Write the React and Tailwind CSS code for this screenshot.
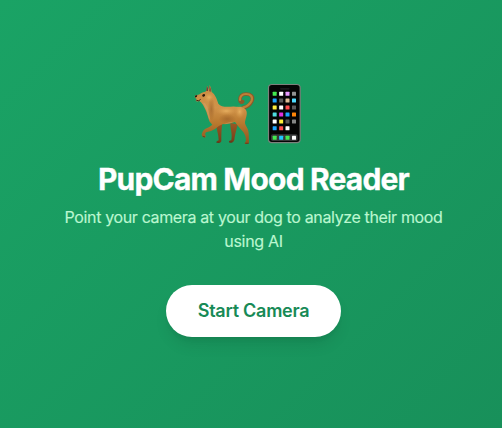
const appRows = [
  ['#43e94f', '#ffffff', '#e99aff', '#929292'],
  ['#1ca5ff', '#5b5b5b', '#dfbd98', '#4fdcff'],
  ['#ffed3b', '#ffffff', '#ff4d4d', '#5b5b5b'],
  ['#4ddbe1', '#df31df', '#1ca5ff', '#ff8508'],
  ['#ffffff', '#fff03a', '#555555', '#858585'],
  ['#1ca5ff', '#ff4d4d', '#ffffff'],
];
const dock = ['#43e94f', '#21c7ff', '#43e94f', '#ffffff'];
const columns = [53, 72.5, 91.5, 111];

function Dog() {
  return (
    <svg className="h-[75px] w-[75px]" viewBox="0 0 225 225" role="img" aria-label="Dog">
      <defs>
        <linearGradient id="coat" x1="0" y1="0" x2="0" y2="1">
          <stop offset="0" stopColor="#c98a40" />
          <stop offset=".38" stopColor="#d0934a" />
          <stop offset=".65" stopColor="#b8792f" />
          <stop offset="1" stopColor="#8c531f" />
        </linearGradient>
        <linearGradient id="far" x1="0" y1="0" x2="0" y2="1">
          <stop offset="0" stopColor="#9a5925" />
          <stop offset="1" stopColor="#713e19" />
        </linearGradient>
        <radialGradient id="light">
          <stop offset="0" stopColor="#edb766" stopOpacity=".8" />
          <stop offset="1" stopColor="#d6994c" stopOpacity="0" />
        </radialGradient>
        <radialGradient id="shade">
          <stop offset="0" stopColor="#965c26" stopOpacity=".6" />
          <stop offset="1" stopColor="#965c26" stopOpacity="0" />
        </radialGradient>
      </defs>
      <path d="M175 98c12-2 21-10 26-21c5-12-4-20-18-20c-12 0-20 8-18 19c1 5 5 7 8 4" fill="none" stroke="#8d5829" strokeWidth="11" strokeLinecap="round" />
      <path d="M175 97c11-3 20-10 25-20c4-12-4-20-17-20c-12 0-19 8-18 18" fill="none" stroke="#bd8038" strokeWidth="6.5" strokeLinecap="round" />
      <path d="M94 145L113 140C109 157 109 182 109 199Q108 204 100 204Q93 203 95 199L101 196C101 177 94 165 94 145Z" fill="url(#far)" />
      <path d="M136 144L158 148C155 163 151 173 148 195Q146 203 138 203Q130 202 132 198L139 195C143 175 135 162 136 144Z" fill="url(#far)" />
      <path d="M61 50L65 46L66 32Q71 37 71 45L74 30Q80 40 80 51C91 58 96 74 100 86C107 95 120 96 136 95Q151 94 161 96C173 95 183 100 185 110C187 123 180 132 180 145C182 154 190 161 191 173L192 203Q191 207 182 207Q176 206 181 202L183 195C182 176 173 169 166 161Q156 150 150 141Q128 149 114 147Q98 153 90 162Q78 170 63 172L60 177Q65 184 61 187Q51 189 50 178Q50 169 60 162Q72 158 82 149L73 139C69 127 66 111 59 99Q55 90 48 82L43 78Q36 81 32 77L35 72L30 68Q27 61 36 60Q43 60 48 55Q54 50 61 50Z" fill="url(#coat)" />
      <path d="M64 48L66 33Q70 38 69 48ZM73 49L74 32Q78 40 77 50Z" fill="#713a35" />
      <ellipse cx="72" cy="67" rx="17" ry="16" fill="url(#light)" />
      <ellipse cx="124" cy="108" rx="33" ry="13" fill="url(#light)" />
      <ellipse cx="164" cy="110" rx="15" ry="21" fill="url(#light)" />
      <ellipse cx="79" cy="102" rx="11" ry="36" fill="url(#shade)" />
      <ellipse cx="127" cy="132" rx="27" ry="15" fill="url(#shade)" />
      <path d="M53 85C61 92 63 103 67 115Q70 130 76 137Q75 127 73 119C70 105 67 93 60 85Z" fill="#cda36c" opacity=".55" />
      <path d="M118 146Q134 141 146 142Q134 147 118 146Z" fill="#cda775" opacity=".6" />
      <path d="M30 64Q31 59 37 61Q37 67 31 68Z" fill="#17130d" />
      <path d="M34 76Q42 80 47 73" fill="none" stroke="#432315" strokeWidth="3" />
      <ellipse cx="56" cy="61" rx="4.5" ry="3.5" transform="rotate(-25 56 61)" fill="#29180c" />
      <path d="M94 202H104M132 201H142M181 205H191M53 184L60 186" stroke="#57301a" strokeWidth="2" />
    </svg>
  );
}

function Phone() {
  return (
    <svg className="h-[75px] w-[55px]" viewBox="15 0 165 225" role="img" aria-label="Phone">
      <rect x="40.5" y="28.5" width="95" height="174.5" rx="10" fill="#050505" stroke="#7c817c" strokeWidth="3.5" />
      <rect x="75" y="39" width="29" height="5" rx="2.5" fill="#18191b" />
      <rect x="48" y="178" width="80" height="20" rx="5" fill="#363738" />
      {appRows.map((row, r) => row.map((color, c) => (
        <rect key={`${r}-${c}`} x={columns[c]} y={50 + r * 20.8} width="12" height="12" rx="1.5" fill={color} />
      )))}
      {dock.map((color, c) => <rect key={c} x={columns[c]} y="182.5" width="12" height="12" rx="1.5" fill={color} />)}
    </svg>
  );
}

export default function App() {
  return (
    <main className="flex h-screen w-screen flex-col items-center overflow-hidden bg-linear-135 from-[#1aa365] to-[#18905a] pt-[75px] pl-[5px] font-['Inter','Liberation_Sans',sans-serif]">
      <div className="mr-[7px] flex h-[75px] w-[130px]">
        <Dog />
        <Phone />
      </div>
      <h1 className="mt-[11px] text-[30px] leading-9 font-bold tracking-[-0.82px] whitespace-nowrap text-white [-webkit-text-stroke:0.3px_white]">PupCam Mood Reader</h1>
      <p className="mt-2 w-[400px] text-center text-base leading-6 tracking-[-0.36px] text-[#bbf7d0] [-webkit-text-stroke:0.15px_#bbf7d0]">
        Point your camera at your dog to analyze their mood<br /><span className="tracking-[-0.3px]">using AI</span>
      </p>
      <button className="mt-8 h-[52px] w-[175px] rounded-full bg-white text-lg font-semibold tracking-[-0.25px] whitespace-nowrap text-[#178a56] shadow-lg">Start Camera</button>
    </main>
  );
}
